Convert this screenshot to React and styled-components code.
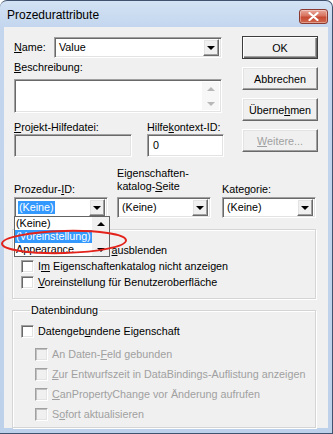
import React from 'react';
import styled, { createGlobalStyle, css } from 'styled-components';

const GlobalStyle = createGlobalStyle`
  html, body {
    margin: 0;
    padding: 0;
    background: #ffffff;
  }
  body {
    font-family: "Liberation Sans", Arial, sans-serif;
    font-size: 10.75px;
    color: #000;
  }
  * {
    box-sizing: border-box;
  }
`;

const sunken = css`
  border: 1px solid;
  border-color: #a0a0a0 #ffffff #ffffff #a0a0a0;
  box-shadow: inset 1px 1px #696969, inset -1px -1px #e3e3e3;
`;

const raised = css`
  border: 1px solid;
  border-color: #ffffff #696969 #696969 #ffffff;
  box-shadow: inset -1px -1px #a0a0a0, inset 1px 1px #e3e3e3;
`;

const Window = styled.div`
  position: relative;
  width: 333px;
  height: 434px;
  display: flex;
  flex-direction: column;
  padding: 0 4px 5px 4px;
  background: linear-gradient(180deg, #d3e2f4 0px, #c3d6ee 27px, #bdd1ea 100%);
  border: 1px solid #3f536f;
  border-left: none;
  border-radius: 7px 7px 0 0;
`;

const TitleBar = styled.div`
  height: 27px;
  display: flex;
  align-items: flex-start;
  padding-left: 3px;
`;

const Title = styled.div`
  font-size: 12px;
  line-height: 14px;
  margin-top: 7px;
  color: #000;
`;

const CloseButton = styled.div`
  margin-left: auto;
  margin-top: 8px;
  width: 29px;
  height: 15px;
  border: 1px solid #8a3a30;
  border-radius: 3px;
  background: linear-gradient(180deg, #e9a99b 0%, #d7735f 45%, #c64a33 55%, #d0694f 100%);
  display: flex;
  align-items: center;
  justify-content: center;
  box-shadow: inset 0 0 0 1px rgba(255, 255, 255, 0.35);
`;

const Client = styled.div`
  position: relative;
  flex: 1;
  background: #f0f0f0;
  padding: 9px 10px 0 10px;
  display: flex;
  flex-direction: column;
`;

const TopSection = styled.div`
  display: flex;
`;

const LeftFields = styled.div`
  width: 210px;
  display: flex;
  flex-direction: column;
`;

const NameRow = styled.div`
  display: flex;
  align-items: center;
  margin-top: 1px;
`;

const Label = styled.div`
  line-height: 13px;
  white-space: nowrap;
  color: ${(p) => (p.$disabled ? '#a0a0a0' : '#000')};
  width: ${(p) => (p.$width ? `${p.$width}px` : 'auto')};
  margin-top: ${(p) => p.$mt || 0}px;
  margin-bottom: ${(p) => p.$mb || 0}px;
`;

const Combo = styled.div`
  ${sunken};
  position: relative;
  width: ${(p) => p.$width}px;
  height: 21px;
  background: #fff;
  display: flex;
  align-items: center;
  padding-left: 3px;
`;

const ComboText = styled.span`
  line-height: 13px;
  padding: 0 1px;
  background: ${(p) => (p.$selected ? '#3399ff' : 'transparent')};
  color: ${(p) => (p.$selected ? '#fff' : '#000')};
`;

const DropButton = styled.div`
  ${raised};
  margin-left: auto;
  margin-right: 2px;
  width: 16px;
  height: 17px;
  background: #f0f0f0;
  display: flex;
  align-items: center;
  justify-content: center;
`;

const Arrow = styled.div`
  width: 0;
  height: 0;
  border-left: 4px solid transparent;
  border-right: 4px solid transparent;
  border-top: 4px solid ${(p) => p.$color || '#000'};
  ${(p) =>
    p.$up &&
    css`
      border-top: none;
      border-bottom: 4px solid ${p.$color || '#000'};
    `}
`;

const TextArea = styled.div`
  ${sunken};
  margin-top: 5px;
  width: 208px;
  height: 34px;
  background: #fff;
  display: flex;
  justify-content: flex-end;
  padding: 2px;
`;

const ScrollBar = styled.div`
  width: 17px;
  display: flex;
  flex-direction: column;
  justify-content: space-between;
  align-items: center;
  padding: 5px 0 4px;
  background: #f7f7f7;
`;

const HelpRow = styled.div`
  display: flex;
  margin-top: 8px;
`;

const HelpCol = styled.div`
  display: flex;
  flex-direction: column;
  margin-left: ${(p) => p.$ml || 0}px;
`;

const TextBox = styled.div`
  ${sunken};
  width: ${(p) => p.$width}px;
  height: 23px;
  margin-top: ${(p) => p.$mt || 0}px;
  background: ${(p) => (p.$disabled ? '#f0f0f0' : '#fff')};
  display: flex;
  align-items: center;
  padding-left: 5px;
  line-height: 13px;
`;

const ButtonColumn = styled.div`
  margin-left: 18px;
  display: flex;
  flex-direction: column;
  gap: 8px;
`;

const Button = styled.div`
  ${raised};
  width: 76px;
  height: 23px;
  background: #f0f0f0;
  display: flex;
  align-items: center;
  justify-content: center;
  color: ${(p) => (p.$disabled ? '#a0a0a0' : '#000')};
  ${(p) =>
    p.$default &&
    css`
      border-color: #3c3c3c;
      box-shadow: inset 1px 1px #ffffff, inset -1px -1px #696969, inset -2px -2px #a0a0a0;
    `}
`;

const ComboRow = styled.div`
  display: grid;
  grid-template-columns: 103px 105px 94px;
  align-items: end;
  margin-top: 10px;
`;

const ComboCol = styled.div`
  display: flex;
  flex-direction: column;
`;

const Group = styled.fieldset`
  margin: ${(p) => p.$mt || 0}px 0 0 -2px;
  padding: ${(p) => p.$pad};
  width: 304px;
  min-width: 0;
  border: 1px solid #d5d5d5;
  box-shadow: inset 1px 1px #ffffff, 1px 1px #ffffff;
  display: flex;
  flex-direction: column;
`;

const Legend = styled.legend`
  margin-left: 9px;
  padding: 0 1px;
  line-height: 13px;
`;

const CheckRow = styled.div`
  display: flex;
  align-items: center;
  height: ${(p) => p.$h || 16}px;
  margin-left: ${(p) => p.$indent || 0}px;
  margin-bottom: ${(p) => p.$mb || 0}px;
  white-space: nowrap;
  color: ${(p) => (p.$disabled ? '#a0a0a0' : '#000')};
`;

const CheckBox = styled.div`
  ${sunken};
  flex: none;
  width: 13px;
  height: 13px;
  margin-right: 4px;
  background: ${(p) => (p.$disabled ? '#f0f0f0' : '#fff')};
  ${(p) =>
    p.$disabled &&
    css`
      box-shadow: inset 1px 1px #c0c0c0, inset -1px -1px #e3e3e3;
    `}
`;

const DropList = styled.div`
  position: absolute;
  left: 10px;
  top: 189px;
  width: 96px;
  height: 41px;
  border: 1px solid #646464;
  background: #fff;
  display: flex;
  overflow: hidden;
`;

const ListItems = styled.div`
  flex: 1;
  display: flex;
  flex-direction: column;
`;

const ListItem = styled.div`
  height: 13px;
  line-height: 13px;
  padding-left: 1px;
  white-space: nowrap;
  background: ${(p) => (p.$selected ? '#3399ff' : 'transparent')};
  color: ${(p) => (p.$selected ? '#fff' : '#000')};
`;

const ListScroll = styled.div`
  width: 17px;
  background: #f0f0f0;
  display: flex;
  flex-direction: column;
  justify-content: space-between;
  align-items: center;
  padding: 5px 0 4px;
`;

const Annotation = styled.svg`
  position: absolute;
  left: 0;
  top: 224px;
  pointer-events: none;
`;

function Check({ children, disabled, indent, h, mb }) {
  return (
    <CheckRow $disabled={disabled} $indent={indent} $h={h} $mb={mb}>
      <CheckBox $disabled={disabled} />
      <span>{children}</span>
    </CheckRow>
  );
}

export default function App() {
  return (
    <>
      <GlobalStyle />
      <Window>
        <TitleBar>
          <Title>Prozedurattribute</Title>
          <CloseButton>
            <svg width="11" height="9" viewBox="0 0 11 9">
              <path d="M1.5 1 L9.5 8 M9.5 1 L1.5 8" stroke="#fff" strokeWidth="2.2" strokeLinecap="round" />
            </svg>
          </CloseButton>
        </TitleBar>
        <Client>
          <TopSection>
            <LeftFields>
              <NameRow>
                <Label $width={40}>
                  <u>N</u>ame:
                </Label>
                <Combo $width={168}>
                  <ComboText>Value</ComboText>
                  <DropButton>
                    <Arrow />
                  </DropButton>
                </Combo>
              </NameRow>
              <Label $mt={3}>
                <u>B</u>eschreibung:
              </Label>
              <TextArea>
                <ScrollBar>
                  <Arrow $up $color="#b8b8b8" />
                  <Arrow $color="#b8b8b8" />
                </ScrollBar>
              </TextArea>
              <HelpRow>
                <HelpCol>
                  <Label>
                    <u>P</u>rojekt-Hilfedatei:
                  </Label>
                  <TextBox $width={118} $disabled />
                </HelpCol>
                <HelpCol $ml={15}>
                  <Label>
                    Hilfe<u>k</u>ontext-ID:
                  </Label>
                  <TextBox $width={77}>0</TextBox>
                </HelpCol>
              </HelpRow>
            </LeftFields>
            <ButtonColumn>
              <Button $default>OK</Button>
              <Button>Abbrechen</Button>
              <Button>
                Überne<u>h</u>men
              </Button>
              <Button $disabled>
                <span>
                  <u>W</u>eitere...
                </span>
              </Button>
            </ButtonColumn>
          </TopSection>

          <ComboRow>
            <ComboCol>
              <Label $mb={1}>
                Prozedur-<u>I</u>D:
              </Label>
              <Combo $width={94}>
                <ComboText $selected>(Keine)</ComboText>
                <DropButton>
                  <Arrow />
                </DropButton>
              </Combo>
            </ComboCol>
            <ComboCol>
              <Label $mb={4}>
                Eigenschaften-
                <br />
                katalog-<u>S</u>eite
              </Label>
              <Combo $width={94}>
                <ComboText>(Keine)</ComboText>
                <DropButton>
                  <Arrow />
                </DropButton>
              </Combo>
            </ComboCol>
            <ComboCol>
              <Label $mb={1}>
                Kate<u>g</u>orie:
              </Label>
              <Combo $width={94}>
                <ComboText>(Keine)</ComboText>
                <DropButton>
                  <Arrow />
                </DropButton>
              </Combo>
            </ComboCol>
          </ComboRow>

          <Group $mt={11} $pad="12px 0 8px 8px">
            <Check>
              Diesen Eintrag <u>a</u>usblenden
            </Check>
            <Check>
              I<u>m</u> Eigenschaftenkatalog nicht anzeigen
            </Check>
            <Check>
              <u>V</u>oreinstellung für Benutzeroberfläche
            </Check>
          </Group>

          <Group $mt={5} $pad="4px 0 3px 8px">
            <Legend>Datenbindung</Legend>
            <Check h={20} mb={3}>
              Datengeb<u>u</u>ndene Eigenschaft
            </Check>
            <Check disabled indent={14} h={20}>
              An Daten-<u>F</u>eld gebunden
            </Check>
            <Check disabled indent={14} h={20}>
              <u>Z</u>ur Entwurfszeit in DataBindings-Auflistung anzeigen
            </Check>
            <Check disabled indent={14} h={20}>
              <u>C</u>anPropertyChange vor Änderung aufrufen
            </Check>
            <Check disabled indent={14} h={20}>
              S<u>o</u>fort aktualisieren
            </Check>
          </Group>

          <DropList>
            <ListItems>
              <ListItem>(Keine)</ListItem>
              <ListItem $selected>(Voreinstellung)</ListItem>
              <ListItem>Appearance</ListItem>
            </ListItems>
            <ListScroll>
              <Arrow $up />
              <Arrow />
            </ListScroll>
          </DropList>
        </Client>
        <Annotation width="132" height="34" viewBox="0 0 132 34">
          <ellipse cx="64" cy="17" rx="62" ry="11" fill="none" stroke="#e3231b" strokeWidth="2" transform="rotate(-1.5 64 17)" />
        </Annotation>
      </Window>
    </>
  );
}
